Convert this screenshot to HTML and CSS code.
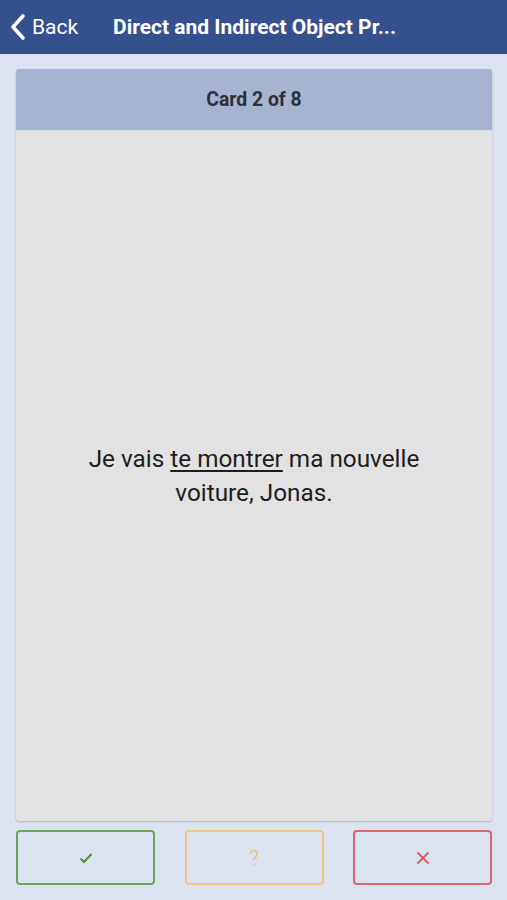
FILE: index.html
```html
<!DOCTYPE html>
<html>
<head>
<meta charset="utf-8">
<link rel="stylesheet" href="styles.css">
</head>
<body>
<div class="app">
  <header class="topbar">
    <div class="back">
      <svg class="chev" width="18" height="28" viewBox="0 0 18 28"><path d="M14 3 L4 14 L14 25" fill="none" stroke="#fff" stroke-width="3.6" stroke-linecap="round" stroke-linejoin="round"/></svg>
      <span>Back</span>
    </div>
    <div class="title">Direct and Indirect Object Pr...</div>
  </header>
  <main class="content">
    <section class="card">
      <div class="card-head">Card 2 of 8</div>
      <div class="card-body">
        <p class="sentence">Je vais <u>te montrer</u> ma nouvelle<br>voiture, Jonas.</p>
      </div>
    </section>
    <div class="actions">
      <button class="btn ok"><svg width="14" height="12" viewBox="0 0 14 12"><path d="M1.5 6.5 L5 10 L12.5 2" fill="none" stroke="#4f8f35" stroke-width="2"/></svg></button>
      <button class="btn maybe">?</button>
      <button class="btn no"><svg width="14" height="14" viewBox="0 0 14 14"><path d="M1.5 1.5 L12.5 12.5 M12.5 1.5 L1.5 12.5" fill="none" stroke="#dc5b63" stroke-width="1.8"/></svg></button>
    </div>
  </main>
</div>
</body>
</html>
```
FILE: styles.css
```css
* { box-sizing: border-box; }
html, body { margin: 0; padding: 0; }
body {
  background: #dbe3f1;
  font-family: Roboto, "Liberation Sans", sans-serif;
  width: 507px;
  height: 900px;
  overflow: hidden;
}
.app { display: flex; flex-direction: column; height: 900px; }
.topbar {
  height: 54px;
  background: #34518e;
  color: #fff;
  display: flex;
  align-items: center;
  padding-left: 9px;
}
.back { display: flex; align-items: center; gap: 5px; font-size: 21px; width: 104px; }
.chev { display: block; }
.title { font-weight: 700; font-size: 21px; letter-spacing: 0; }
.content {
  flex: 1;
  display: flex;
  flex-direction: column;
  padding: 15px 15px 15px 16px;
}
.card {
  height: 752px;
  display: flex;
  flex-direction: column;
  border-radius: 3px;
  overflow: hidden;
  box-shadow: 0 1px 2px rgba(0,0,0,0.22);
  background: #e2e2e2;
}
.card-head {
  height: 62px;
  background: #a6b4d0;
  color: #2e3036;
  font-weight: 700;
  font-size: 19.4px;
  display: flex;
  align-items: center;
  justify-content: center;
  border-bottom: 1px solid #d6d9df;
}
.card-body {
  flex: 1;
  display: flex;
  align-items: center;
  justify-content: center;
}
.sentence {
  margin: 0;
  text-align: center;
  font-size: 24.3px;
  line-height: 34px;
  color: #1d1d1d;
  padding-top: 0;
}
.sentence u { text-underline-offset: 3px; text-decoration-thickness: 2px; }
.actions {
  margin-top: 9px;
  display: flex;
  justify-content: space-between;
}
.btn {
  width: 139px;
  height: 55px;
  background: transparent;
  border: 2px solid;
  border-radius: 4px;
  display: flex;
  align-items: center;
  justify-content: center;
  font-family: Roboto, "Liberation Sans", sans-serif;
  padding: 0;
}
.ok { border-color: #6aa55a; }
.maybe { border-color: #f0c67c; color: #ebb75a; font-size: 20px; font-weight: 300; }
.no { border-color: #e0646c; }
```
